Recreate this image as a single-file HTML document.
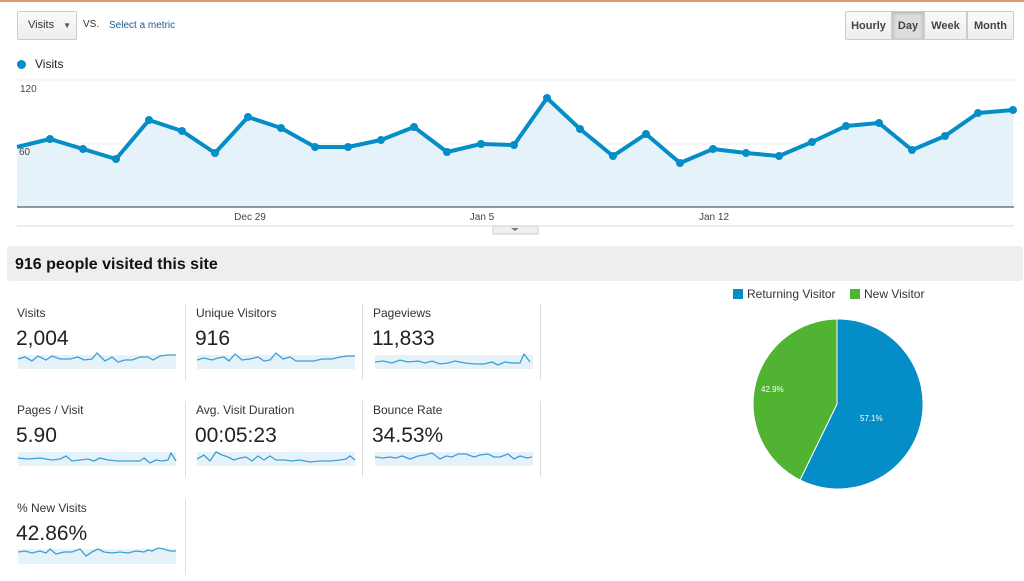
<!DOCTYPE html>
<html><head><style>
body{margin:0;width:1024px;height:581px;background:#fff;font-family:"Liberation Sans",Arial,sans-serif;position:relative;overflow:hidden}
.a{position:absolute}
.btn{position:absolute;top:11px;height:29px;border:1px solid #ccc;background:linear-gradient(#fafafa,#eee);font-size:11px;font-weight:bold;color:#444;line-height:28px;text-align:center;box-sizing:border-box}
.lab{font-size:12px;color:#333}
.val{font-size:21px;color:#222}
.div{position:absolute;width:1px;background:#ddd}
</style></head><body>
<div class="a" style="left:0;top:0;width:1024px;height:2px;background:#d99a72"></div>
<div class="a" style="left:17px;top:11px;width:60px;height:29px;border:1px solid #ccc;border-radius:2px;background:linear-gradient(#fafafa,#eee);box-sizing:border-box;font-size:11px;color:#333;line-height:27px;padding-left:10px">Visits <span style="font-size:8px;color:#555;margin-left:6px">▼</span></div>
<div class="a" style="left:83px;top:19px;font-size:10px;color:#333">VS.</div>
<div class="a" style="left:109px;top:20px;font-size:10px;color:#1a5a96">Select a metric</div>
<div class="btn" style="left:845px;width:47px;border-radius:2px 0 0 2px">Hourly</div>
<div class="btn" style="left:892px;width:32px;background:#ddd;box-shadow:inset 0 1px 3px #aaa">Day</div>
<div class="btn" style="left:924px;width:43px">Week</div>
<div class="btn" style="left:967px;width:47px;border-radius:0 2px 2px 0">Month</div>
<div class="a" style="left:17px;top:60px;width:9px;height:9px;border-radius:50%;background:#058dc7"></div>
<div class="a" style="left:35px;top:57px;font-size:12px;color:#222">Visits</div>
<svg class="a" style="left:0;top:0" width="1024" height="240">
<line x1="17" y1="80" x2="1014" y2="80" stroke="#eee"/>
<line x1="17" y1="144" x2="1014" y2="144" stroke="#eee"/>
<polygon fill="#e6f2f9" points="17,207 17,147 50,139 83,149 116,159 149,120 182,131 215,153 248,117 281,128 315,147 348,147 381,140 414,127 447,152 481,144 514,145 547,98 580,129 613,156 646,134 680,163 713,149 746,153 779,156 812,142 846,126 879,123 912,150 945,136 978,113 1013,110 1013,207"/>
<polyline fill="none" stroke="#058dc7" stroke-width="4" stroke-linejoin="round" points="17,147 50,139 83,149 116,159 149,120 182,131 215,153 248,117 281,128 315,147 348,147 381,140 414,127 447,152 481,144 514,145 547,98 580,129 613,156 646,134 680,163 713,149 746,153 779,156 812,142 846,126 879,123 912,150 945,136 978,113 1013,110"/>
<g fill="#058dc7"><circle cx="50" cy="139" r="4"/><circle cx="83" cy="149" r="4"/><circle cx="116" cy="159" r="4"/><circle cx="149" cy="120" r="4"/><circle cx="182" cy="131" r="4"/><circle cx="215" cy="153" r="4"/><circle cx="248" cy="117" r="4"/><circle cx="281" cy="128" r="4"/><circle cx="315" cy="147" r="4"/><circle cx="348" cy="147" r="4"/><circle cx="381" cy="140" r="4"/><circle cx="414" cy="127" r="4"/><circle cx="447" cy="152" r="4"/><circle cx="481" cy="144" r="4"/><circle cx="514" cy="145" r="4"/><circle cx="547" cy="98" r="4"/><circle cx="580" cy="129" r="4"/><circle cx="613" cy="156" r="4"/><circle cx="646" cy="134" r="4"/><circle cx="680" cy="163" r="4"/><circle cx="713" cy="149" r="4"/><circle cx="746" cy="153" r="4"/><circle cx="779" cy="156" r="4"/><circle cx="812" cy="142" r="4"/><circle cx="846" cy="126" r="4"/><circle cx="879" cy="123" r="4"/><circle cx="912" cy="150" r="4"/><circle cx="945" cy="136" r="4"/><circle cx="978" cy="113" r="4"/><circle cx="1013" cy="110" r="4"/></g>
<line x1="17" y1="207" x2="1014" y2="207" stroke="#333"/>
<line x1="17" y1="226" x2="1014" y2="226" stroke="#ddd"/>
<text x="20" y="92" font-size="10" fill="#444" font-family="Liberation Sans">120</text>
<text x="19" y="155" font-size="10" fill="#444" font-family="Liberation Sans">60</text>
<text x="250" y="220" font-size="10" fill="#444" text-anchor="middle" font-family="Liberation Sans">Dec 29</text>
<text x="482" y="220" font-size="10" fill="#444" text-anchor="middle" font-family="Liberation Sans">Jan 5</text>
<text x="714" y="220" font-size="10" fill="#444" text-anchor="middle" font-family="Liberation Sans">Jan 12</text>
<rect x="493" y="226" width="45" height="8" fill="#f0f0f0" stroke="#ccc"/>
<path d="M511 228 L519 228 L515 231Z" fill="#777"/>
</svg>
<div class="a" style="left:7px;top:246px;width:1016px;height:35px;background:#eee;border-radius:4px"></div>
<div class="a" style="left:15px;top:256px;font-size:16px;font-weight:bold;color:#111">916 people visited this site</div>

<div class="div" style="left:185px;top:304px;height:76px"></div>
<div class="div" style="left:362px;top:304px;height:76px"></div>
<div class="div" style="left:540px;top:304px;height:76px"></div>
<div class="div" style="left:185px;top:401px;height:76px"></div>
<div class="div" style="left:362px;top:401px;height:76px"></div>
<div class="div" style="left:540px;top:401px;height:76px"></div>
<div class="div" style="left:185px;top:499px;height:76px"></div>

<div class="a lab" style="left:17px;top:306px">Visits</div><div class="a val" style="left:16px;top:327px">2,004</div>
<div class="a lab" style="left:196px;top:306px">Unique Visitors</div><div class="a val" style="left:195px;top:327px">916</div>
<div class="a lab" style="left:373px;top:306px">Pageviews</div><div class="a val" style="left:372px;top:327px">11,833</div>
<div class="a lab" style="left:17px;top:403px">Pages / Visit</div><div class="a val" style="left:16px;top:424px">5.90</div>
<div class="a lab" style="left:196px;top:403px">Avg. Visit Duration</div><div class="a val" style="left:195px;top:424px">00:05:23</div>
<div class="a lab" style="left:373px;top:403px">Bounce Rate</div><div class="a val" style="left:372px;top:424px">34.53%</div>
<div class="a lab" style="left:17px;top:501px">% New Visits</div><div class="a val" style="left:16px;top:522px">42.86%</div>

<svg class="a" style="left:0;top:0" width="560" height="581">
<g fill="#e6f2f9" stroke="none">
<rect x="18" y="355" width="158" height="14"/><rect x="197" y="355" width="158" height="14"/><rect x="375" y="355" width="158" height="14"/>
<rect x="18" y="452" width="158" height="14"/><rect x="197" y="452" width="158" height="14"/><rect x="375" y="452" width="158" height="14"/>
<rect x="18" y="549" width="158" height="15"/>
</g>
<g fill="none" stroke="#3ba0d6" stroke-width="1.3">
<polyline points="18,359 25,357 32,361 38,356 46,360 52,356 60,359 70,359 78,357 84,360 92,359 97,353 105,361 112,357 118,362 125,360 132,360 140,357 148,357 153,360 160,356 168,355 176,355"/>
<polyline points="197,360 204,358 212,360 218,358 224,357 229,361 235,354 242,360 250,359 258,357 264,361 270,360 276,353 283,359 290,357 296,361 305,361 314,361 322,359 332,359 340,357 348,356 355,356"/>
<polyline points="375,362 383,361 392,363 400,360 408,362 418,361 425,363 432,361 440,364 448,363 455,361 465,363 475,364 484,364 492,362 498,365 505,362 512,363 520,363 524,354 530,362"/>
<polyline points="18,458 28,459 40,458 52,460 60,459 66,456 72,461 80,460 88,459 94,461 100,458 108,460 118,461 130,461 140,461 144,458 150,463 156,460 162,461 168,460 171,453 176,461"/>
<polyline points="197,459 204,455 210,461 216,452 222,455 228,457 234,460 240,458 246,457 252,461 258,456 264,460 270,456 276,460 284,460 292,461 300,460 310,462 320,461 330,461 340,460 346,459 350,456 355,460"/>
<polyline points="375,457 383,458 390,457 396,458 402,456 410,459 418,456 425,455 432,453 440,459 446,456 452,457 458,454 466,454 474,457 480,455 488,454 494,457 500,457 508,454 514,459 520,456 527,458 532,457"/>
<polyline points="18,552 25,551 32,553 40,551 46,553 50,549 56,554 64,552 72,552 80,549 86,556 92,552 98,549 104,552 112,553 120,552 128,553 136,551 144,552 148,550 152,551 158,548 164,549 170,551 176,551"/>
</g>
</svg>

<div class="a" style="left:733px;top:289px;width:10px;height:10px;background:#058dc7"></div>
<div class="a" style="left:747px;top:287px;font-size:12px;color:#333">Returning Visitor</div>
<div class="a" style="left:850px;top:289px;width:10px;height:10px;background:#50b432"></div>
<div class="a" style="left:864px;top:287px;font-size:12px;color:#333">New Visitor</div>
<svg class="a" style="left:740px;top:310px" width="200" height="190">
<path d="M97 9 A85 85 0 1 1 60 170 L97 94Z" fill="#058dc7" stroke="#fff" stroke-width="1"/>
<path d="M97 9 A85 85 0 0 0 60 170 L97 94Z" fill="#50b432" stroke="#fff" stroke-width="1"/>
<text x="21" y="82" font-size="8" fill="#fff" font-family="Liberation Sans">42.9%</text>
<text x="120" y="111" font-size="8" fill="#fff" font-family="Liberation Sans">57.1%</text>
</svg>
</body></html>
